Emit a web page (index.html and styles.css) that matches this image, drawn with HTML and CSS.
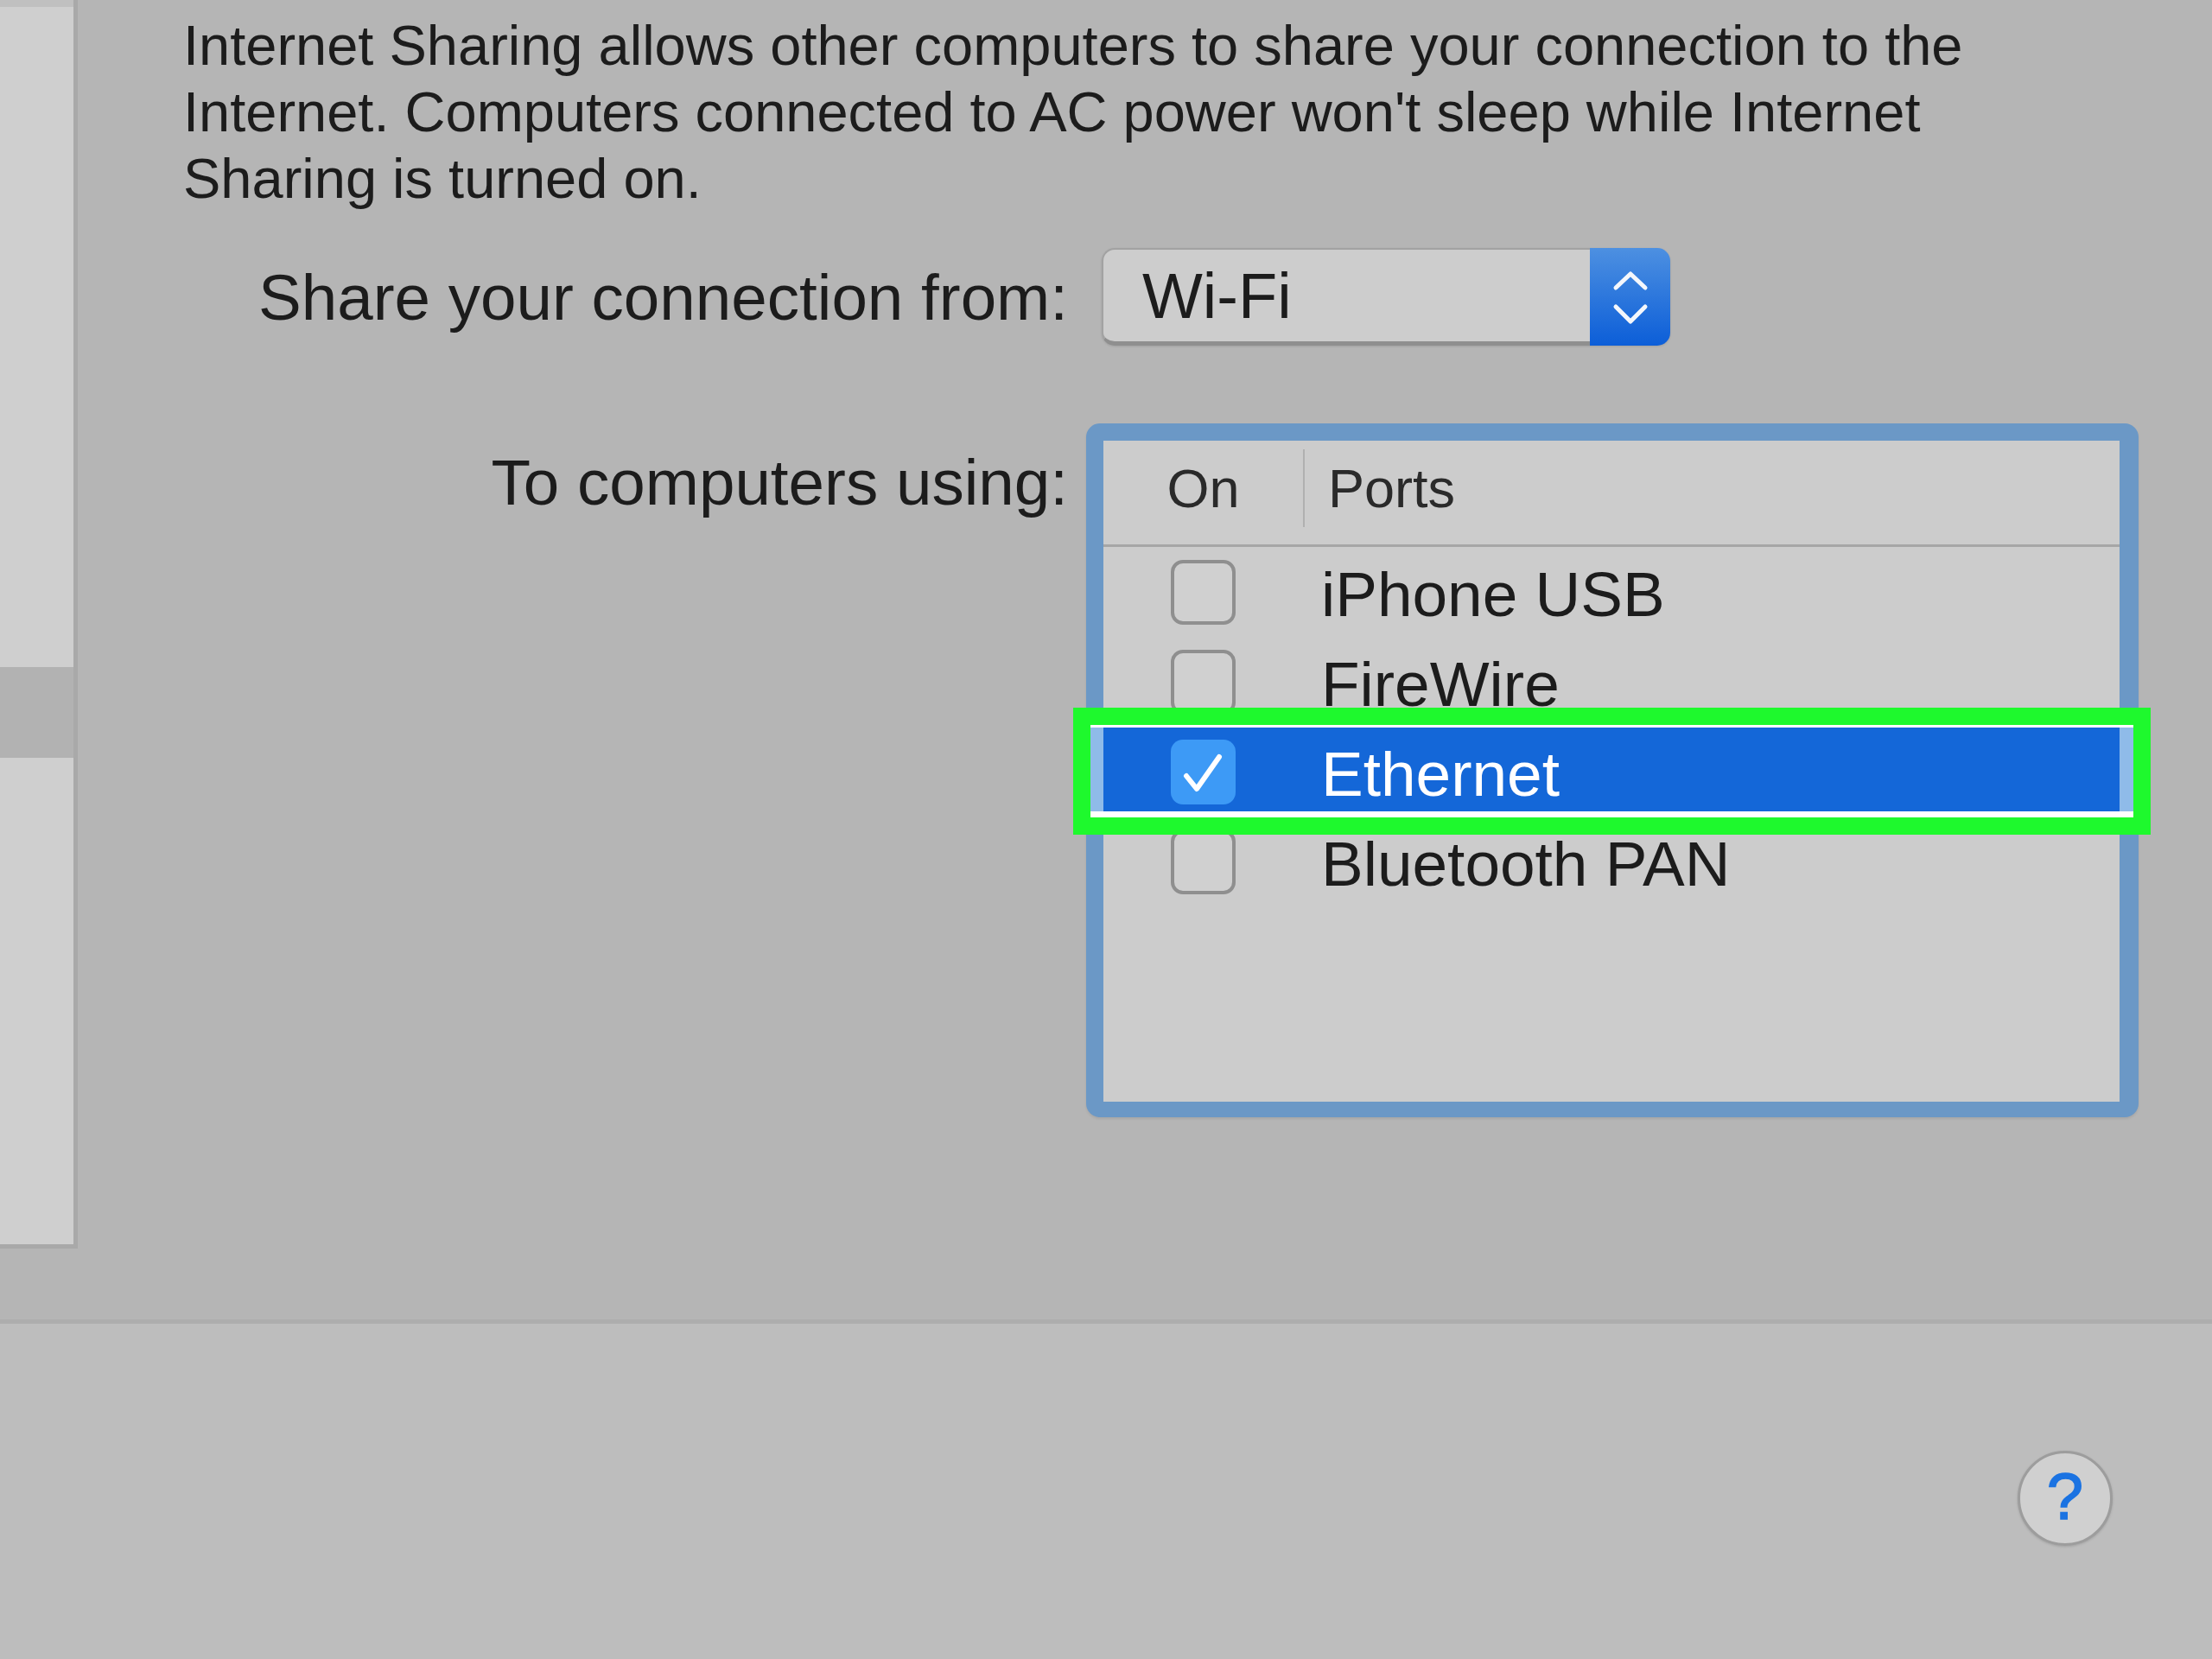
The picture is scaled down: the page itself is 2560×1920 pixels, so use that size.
FILE: index.html
```html
<!DOCTYPE html>
<html lang="en">
<head>
<meta charset="utf-8">
<title>Internet Sharing</title>
<link rel="stylesheet" href="styles.css">
</head>
<body>
<div class="window">
  <div class="upper">
    <aside class="sidebar">
      <div class="sb-top"></div>
      <div class="sb-item sb-selected"></div>
    </aside>
    <main class="content">
      <p class="intro">Internet Sharing allows other computers to share your connection to the<br>Internet. Computers connected to AC power won't sleep while Internet<br>Sharing is turned on.</p>

      <div class="form-row row-from">
        <label class="form-label">Share your connection from:</label>
        <div class="popup">
          <span class="popup-value">Wi-Fi</span>
          <span class="popup-arrows">
            <svg width="93" height="113" viewBox="0 0 93 113">
              <polyline points="30,46 47,30 64,46" fill="none" stroke="#f4f7fc" stroke-width="5" stroke-linecap="round" stroke-linejoin="round"/>
              <polyline points="30,68 47,85 64,68" fill="none" stroke="#f4f7fc" stroke-width="5" stroke-linecap="round" stroke-linejoin="round"/>
            </svg>
          </span>
        </div>
      </div>

      <div class="form-row row-to">
        <label class="form-label label-to">To computers using:</label>
        <div class="focus-ring">
          <div class="ports-table">
            <div class="thead">
              <div class="th th-on">On</div>
              <div class="col-sep"></div>
              <div class="th th-ports">Ports</div>
            </div>
            <div class="tr">
              <div class="td td-on"><span class="checkbox"></span></div>
              <div class="td td-port">iPhone USB</div>
            </div>
            <div class="tr">
              <div class="td td-on"><span class="checkbox"></span></div>
              <div class="td td-port">FireWire</div>
            </div>
            <div class="tr tr-selected">
              <div class="td td-on">
                <span class="checkbox checked">
                  <svg width="75" height="75" viewBox="0 0 75 75">
                    <polyline points="18,42 30,57 56,20" fill="none" stroke="#ffffff" stroke-width="6" stroke-linecap="round" stroke-linejoin="round"/>
                  </svg>
                </span>
              </div>
              <div class="td td-port">Ethernet</div>
              <div class="highlight"></div>
            </div>
            <div class="tr">
              <div class="td td-on"><span class="checkbox"></span></div>
              <div class="td td-port">Bluetooth PAN</div>
            </div>
          </div>
        </div>
      </div>
    </main>
  </div>
  <div class="bottom-bar">
    <button class="help" type="button">?</button>
  </div>
</div>
</body>
</html>
```

FILE: styles.css
```css
* {
  box-sizing: border-box;
}

html, body {
  margin: 0;
  padding: 0;
}

body {
  width: 2560px;
  height: 1920px;
  overflow: hidden;
  background: #b5b5b5;
  font-family: "Liberation Sans", Arial, sans-serif;
  color: #1c1c1c;
}

.window {
  width: 2560px;
  height: 1920px;
  display: flex;
  flex-direction: column;
}

.upper {
  height: 1527px;
  display: flex;
  align-items: flex-start;
  background: #b5b5b5;
}

/* Sidebar (cut-off list on the left) */
.sidebar {
  width: 90px;
  height: 1445px;
  flex: none;
  background: #cfcfcf;
  border-right: 5px solid #a9a9a9;
  border-bottom: 5px solid #a9a9a9;
  display: flex;
  flex-direction: column;
}

.sb-top {
  height: 8px;
  background: #c0c0c0;
}

.sb-item {
  height: 105px;
}

.sb-selected {
  margin-top: 764px;
  background: #b2b2b2;
}

/* Main content */
.content {
  flex: 1;
  padding: 14px 0 0 122px;
}

.intro {
  margin: 0;
  font-size: 65px;
  line-height: 77px;
  color: #1c1c1c;
  white-space: nowrap;
}

.form-row {
  display: flex;
}

.row-from {
  margin-top: 42px;
  align-items: center;
}

.row-to {
  margin-top: 90px;
  align-items: flex-start;
}

.form-label {
  width: 1024px;
  flex: none;
  text-align: right;
  font-size: 74.6px;
  line-height: 90px;
  color: #1c1c1c;
  white-space: nowrap;
}

.label-to {
  padding-top: 23px;
}

/* Popup button */
.popup {
  margin-left: 39px;
  width: 658px;
  height: 113px;
  display: flex;
  filter: drop-shadow(0 1px 1px rgba(0, 0, 0, 0.12));
}

.popup-value {
  flex: 1;
  display: flex;
  align-items: center;
  padding-left: 45px;
  padding-bottom: 0;
  background: #cdcdcd;
  border-top: 2px solid #a2a2a2;
  border-left: 2px solid #a2a2a2;
  border-bottom: 5px solid #8f8f8f;
  border-radius: 15px 0 0 15px;
  font-size: 74px;
  color: #1c1c1c;
}

.popup-arrows {
  width: 93px;
  flex: none;
  background: linear-gradient(#4d90e1, #0c5ed8);
  border-radius: 0 15px 15px 0;
  display: flex;
}

/* Table with focus ring */
.focus-ring {
  margin-left: 21px;
  width: 1218px;
  height: 803px;
  padding: 20px 22px 18px 20px;
  background: #6b98c6;
  border-radius: 16px;
  box-shadow: 0 2px 3px rgba(0, 0, 0, 0.08);
}

.ports-table {
  height: 100%;
  background: #cccccc;
  display: flex;
  flex-direction: column;
}

.thead {
  height: 123px;
  flex: none;
  display: flex;
  align-items: center;
  padding-bottom: 10px;
  border-bottom: 3px solid #a6a6a6;
  font-size: 63px;
  color: #2a2a2a;
}

.th-on {
  width: 231px;
  text-align: center;
}

.col-sep {
  width: 2px;
  height: 90px;
  background: #b0b0b0;
}

.th-ports {
  padding-left: 27px;
}

.tr {
  height: 104px;
  flex: none;
  display: flex;
  align-items: center;
  font-size: 73px;
  color: #1c1c1c;
}

.td-on {
  width: 231px;
  display: flex;
  justify-content: center;
}

.td-port {
  padding-left: 21px;
  padding-top: 4px;
  white-space: nowrap;
}

.checkbox {
  width: 75px;
  height: 75px;
  display: block;
  border: 4px solid #8f8f8f;
  border-radius: 14px;
  background: #d0d0d0;
}

.checkbox.checked {
  border: none;
  background: #3d9af6;
}

.checkbox.checked svg {
  display: block;
}

.tr-selected {
  position: relative;
  background: #1467d8;
  color: #ffffff;
}

/* Green annotation box around the selected row */
.highlight {
  position: absolute;
  left: -35px;
  right: -36px;
  top: -22px;
  bottom: -21px;
  border: 20px solid #1ef92d;
  box-shadow:
    inset 0 3px 0 #ffffff,
    inset 0 -7px 0 #ffffff,
    inset 15px 0 0 #8fbbe9,
    inset -16px 0 0 #8fbbe9;
}

/* Bottom bar with help button */
.bottom-bar {
  flex: 1;
  background: #bdbdbd;
  border-top: 5px solid #adadad;
  display: flex;
  justify-content: flex-end;
  align-items: flex-start;
  padding: 147px 115px 0 0;
}

.help {
  width: 110px;
  height: 110px;
  padding: 0 0 4px 0;
  border-radius: 50%;
  border: 3px solid #9d9d9d;
  background: #d0d0d0;
  box-shadow: 0 1px 3px rgba(0, 0, 0, 0.15);
  color: #1b73e2;
  font-family: "Liberation Sans", Arial, sans-serif;
  font-weight: normal;
  -webkit-text-stroke: 1.5px #1b73e2;
  font-size: 76px;
  line-height: 1;
  display: flex;
  align-items: center;
  justify-content: center;
}
```
